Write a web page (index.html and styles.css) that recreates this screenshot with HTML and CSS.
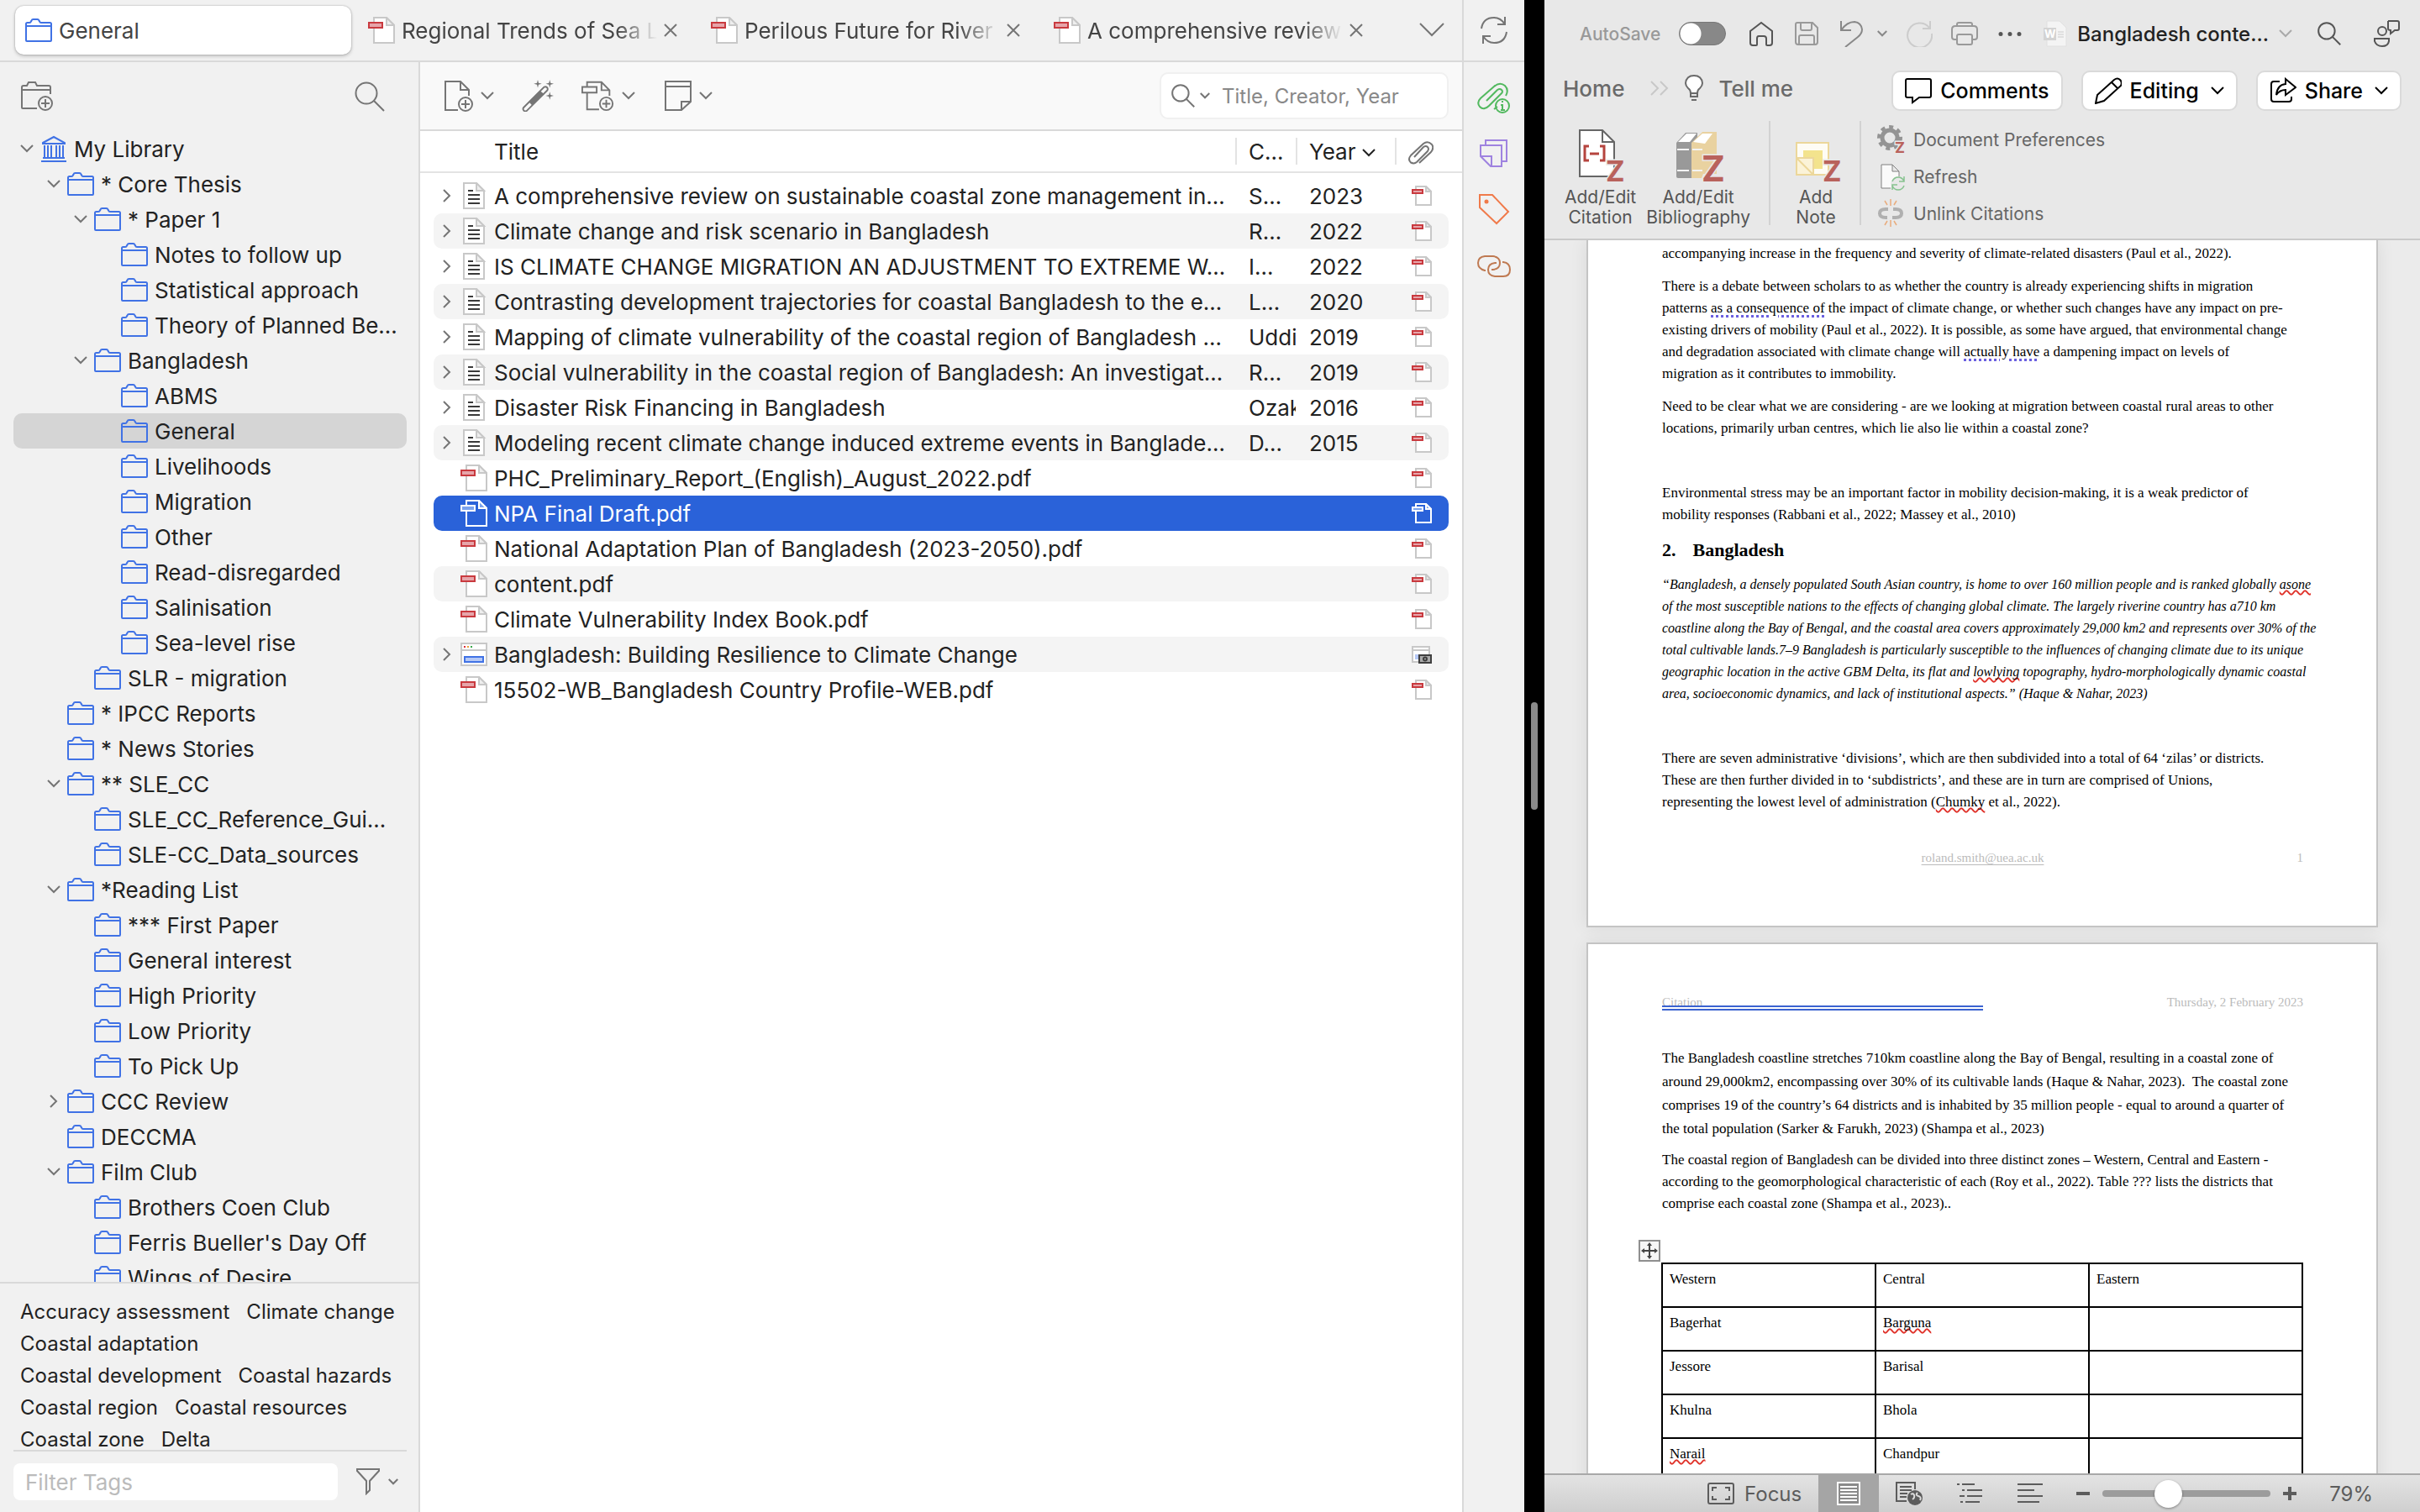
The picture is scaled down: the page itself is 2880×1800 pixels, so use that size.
FILE: index.html
```html
<!DOCTYPE html>
<html lang="en">
<head>
    <meta charset="UTF-8">
    <meta name="viewport" content="width=device-width, initial-scale=1.0">
    <title>General - Library</title>
    <link rel="stylesheet" href="styles.css">
</head>
<body>
    <!-- shared icons -->
    <svg class="icon-defs" aria-hidden="true">
        <symbol id="i-folder" viewBox="0 0 32 28">
            <path d="M1 26V6.500q0-1.500 1.500-1.500h2.500q1.500 0 2-1.500l.5-1q.5-1.500 2-1.500h5q1.500 0 2 1.500l.5 1q.5 1.500 2 1.500h10.500q1.500 0 1.500 1.500V26q0 1-1 1H2q-1 0-1-1zM1 9h30" fill="none" stroke="currentColor" stroke-width="2"/>
        </symbol>
        <symbol id="i-library" viewBox="0 0 32 32">
            <path d="M3 9l13-7 13 7v1H3zM5 12v14M9 12v14M13 12v14M19 12v14M23 12v14M27 12v14M3 27h26M1 31h30" fill="none" stroke="currentColor" stroke-width="2"/>
        </symbol>
        <symbol id="i-down" viewBox="0 0 16 10">
            <path d="M1 1l7 7 7-7" fill="none" stroke="currentColor" stroke-width="2" vector-effect="non-scaling-stroke"/>
        </symbol>
        <symbol id="i-right" viewBox="0 0 10 16">
            <path d="M1 1l7 7-7 7" fill="none" stroke="currentColor" stroke-width="2"/>
        </symbol>
        <symbol id="i-close" viewBox="0 0 16 16">
            <path d="M1 1l14 14M15 1L1 15" fill="none" stroke="currentColor" stroke-width="2"/>
        </symbol>
        <symbol id="i-search" viewBox="0 0 36 36">
            <path d="M14 1.500a12.500 12.500 0 1 1 0 25a12.500 12.500 0 1 1 0-25zM23 23l12 12" fill="none" stroke="currentColor" stroke-width="2" vector-effect="non-scaling-stroke"/>
        </symbol>
        <symbol id="i-pdf" viewBox="0 0 32 32">
            <path class="sheet" d="M7 1h15l9 9v21H7z"/>
            <path class="fold" d="M22 1v9h9z"/>
            <path class="band" d="M1 7h16v6H1z"/>
        </symbol>
        <symbol id="i-pdf-small" viewBox="0 0 24 24">
            <path class="sheet" d="M5 1h12l6 6v16H5z"/>
            <path class="fold" d="M17 1v6h6z"/>
            <path class="band" d="M1 5h12v4H1z"/>
        </symbol>
        <symbol id="i-article" viewBox="0 0 32 32">
            <path class="sheet" d="M4 1h15l9 9v21H4z"/>
            <path class="fold" d="M19 1v9h9z"/>
            <path d="M9 10h6M9 15h14M9 20h14M9 25h14" stroke="#3a3a3a" stroke-width="2"/>
        </symbol>
        <symbol id="i-webpage" viewBox="0 0 32 28">
            <path class="sheet" d="M1 1h30v26H1zM1 9h30"/>
            <path d="M4 5h2" stroke="#db2c3a" stroke-width="2"/>
            <path d="M8 5h2" stroke="#e8a33a" stroke-width="2"/>
            <path d="M12 5h2" stroke="#39a84a" stroke-width="2"/>
            <path d="M5 17h22v6H5z" fill="#b5c8f5" stroke="#4072e5" stroke-width="2"/>
        </symbol>
        <symbol id="i-snapshot" viewBox="0 0 24 24">
            <path class="sheet" d="M1 3h20v18H1zM1 7h20"/>
            <path d="M4 12h7v6H4z" fill="#b5c8f5"/>
            <path d="M9 13h14v9H9z" fill="#aaa" stroke="#3f3f3f" stroke-width="2"/>
            <circle cx="16" cy="17.500" r="2" fill="none" stroke="#3f3f3f" stroke-width="2"/>
        </symbol>
        <symbol id="i-clip" viewBox="0 0 30 28">
            <path d="M13 26L27 13q4-5 1-9-5-5-10-1L3 17q-4 5 0 8.500 4 2 7-.5L23 12q2-3 0-5t-5 0L7 19" fill="none" stroke="currentColor" stroke-width="2"/>
        </symbol>
        <symbol id="i-add-folder" viewBox="0 0 40 36">
            <path d="M20 32H3q-1 0-1-1V7q0-2 2-2h4l2-4h8l2 4h14q2 0 2 2v8M2 10h34" fill="none" stroke="currentColor" stroke-width="2"/>
            <circle cx="30" cy="26" r="8" fill="none" stroke="currentColor" stroke-width="2"/>
            <path d="M30 21v10M25 26h10" stroke="currentColor" stroke-width="2"/>
        </symbol>
        <symbol id="i-new-item" viewBox="0 0 36 38">
            <path d="M17 36H2V2h18l10 10v7M20 2v10h10" fill="none" stroke="currentColor" stroke-width="2"/>
            <circle cx="26" cy="29" r="8" fill="none" stroke="currentColor" stroke-width="2"/>
            <path d="M26 24v10M21 29h10" stroke="currentColor" stroke-width="2"/>
        </symbol>
        <symbol id="i-wand" viewBox="0 0 40 40">
            <path d="M2 35L28 9q2-1 3.500.5T32 13L6 39q-2 1-3.500-.5T2 35z" fill="none" stroke="currentColor" stroke-width="2"/>
            <path d="M9 28L23 14l5 4L13 32z" fill="currentColor"/>
            <path d="M20 0l1 4 4 1-4 1-1 4-1-4-4-1 4-1zM35 0l1 4 4 1-4 1-1 4-1-4-4-1 4-1zM35 15l1 4 4 1-4 1-1 4-1-4-4-1 4-1z" fill="currentColor"/>
        </symbol>
        <symbol id="i-attach" viewBox="0 0 42 38">
            <path d="M22 36H7V15M7 8V2h18l10 10v7M25 2v10h10M1 8h18v7H1z" fill="none" stroke="currentColor" stroke-width="2"/>
            <circle cx="31" cy="29" r="8" fill="none" stroke="currentColor" stroke-width="2"/>
            <path d="M31 24v10M26 29h10" stroke="currentColor" stroke-width="2"/>
        </symbol>
        <symbol id="i-note" viewBox="0 0 36 38">
            <path d="M4 2h30v24L23 36H4zM4 8h30M23 36V26h11" fill="none" stroke="currentColor" stroke-width="2"/>
        </symbol>
        <symbol id="i-sync" viewBox="0 0 32 32">
            <path d="M1 14Q3 1 16 1q8 0 13 8M29 0v9H20M31 18q-2 13-15 13-8 0-13-8M3 32V23h9" fill="none" stroke="currentColor" stroke-width="2"/>
        </symbol>
        <symbol id="i-filter" viewBox="0 0 28 32">
            <path d="M1 1h26v2L16 15v11l-4 4V15L1 3z" fill="none" stroke="currentColor" stroke-width="2"/>
        </symbol>
    </svg>

    <div class="desktop">
        <section class="library">
            <header class="tabs">
                <div class="tab active">
                    <svg class="icon-folder"><use href="#i-folder"/></svg>
                    <span class="tab-name">General</span>
                </div>
                <div class="tab">
                    <svg class="icon-file"><use href="#i-pdf"/></svg>
                    <span class="tab-name">Regional Trends of Sea L</span>
                    <button class="plain" aria-label="Close tab"><svg class="icon-close"><use href="#i-close"/></svg></button>
                </div>
                <div class="tab">
                    <svg class="icon-file"><use href="#i-pdf"/></svg>
                    <span class="tab-name">Perilous Future for River</span>
                    <button class="plain" aria-label="Close tab"><svg class="icon-close"><use href="#i-close"/></svg></button>
                </div>
                <div class="tab">
                    <svg class="icon-file"><use href="#i-pdf"/></svg>
                    <span class="tab-name">A comprehensive review</span>
                    <button class="plain" aria-label="Close tab"><svg class="icon-close"><use href="#i-close"/></svg></button>
                </div>
                <button class="plain all-tabs" aria-label="List all tabs"><svg class="icon-down-large"><use href="#i-down"/></svg></button>
                <button class="plain sync" aria-label="Sync"><svg><use href="#i-sync"/></svg></button>
            </header>

            <div class="panes">
                <aside class="collections">
                    <div class="collections-bar">
                        <button class="plain" aria-label="New collection"><svg class="icon-tool"><use href="#i-add-folder"/></svg></button>
                        <button class="plain" aria-label="Filter collections"><svg class="icon-search"><use href="#i-search"/></svg></button>
                    </div>
                    <ul class="tree">
                        <li><svg class="twisty"><use href="#i-down"/></svg><svg class="icon-library"><use href="#i-library"/></svg>My Library</li>
                        <li class="level-1"><svg class="twisty"><use href="#i-down"/></svg><svg class="icon-folder"><use href="#i-folder"/></svg>* Core Thesis</li>
                        <li class="level-2"><svg class="twisty"><use href="#i-down"/></svg><svg class="icon-folder"><use href="#i-folder"/></svg>* Paper 1</li>
                        <li class="level-3"><span class="twisty"></span><svg class="icon-folder"><use href="#i-folder"/></svg>Notes to follow up</li>
                        <li class="level-3"><span class="twisty"></span><svg class="icon-folder"><use href="#i-folder"/></svg>Statistical approach</li>
                        <li class="level-3"><span class="twisty"></span><svg class="icon-folder"><use href="#i-folder"/></svg>Theory of Planned Be…</li>
                        <li class="level-2"><svg class="twisty"><use href="#i-down"/></svg><svg class="icon-folder"><use href="#i-folder"/></svg>Bangladesh</li>
                        <li class="level-3"><span class="twisty"></span><svg class="icon-folder"><use href="#i-folder"/></svg>ABMS</li>
                        <li class="level-3 selected"><span class="twisty"></span><svg class="icon-folder"><use href="#i-folder"/></svg>General</li>
                        <li class="level-3"><span class="twisty"></span><svg class="icon-folder"><use href="#i-folder"/></svg>Livelihoods</li>
                        <li class="level-3"><span class="twisty"></span><svg class="icon-folder"><use href="#i-folder"/></svg>Migration</li>
                        <li class="level-3"><span class="twisty"></span><svg class="icon-folder"><use href="#i-folder"/></svg>Other</li>
                        <li class="level-3"><span class="twisty"></span><svg class="icon-folder"><use href="#i-folder"/></svg>Read-disregarded</li>
                        <li class="level-3"><span class="twisty"></span><svg class="icon-folder"><use href="#i-folder"/></svg>Salinisation</li>
                        <li class="level-3"><span class="twisty"></span><svg class="icon-folder"><use href="#i-folder"/></svg>Sea-level rise</li>
                        <li class="level-2"><span class="twisty"></span><svg class="icon-folder"><use href="#i-folder"/></svg>SLR - migration</li>
                        <li class="level-1"><span class="twisty"></span><svg class="icon-folder"><use href="#i-folder"/></svg>* IPCC Reports</li>
                        <li class="level-1"><span class="twisty"></span><svg class="icon-folder"><use href="#i-folder"/></svg>* News Stories</li>
                        <li class="level-1"><svg class="twisty"><use href="#i-down"/></svg><svg class="icon-folder"><use href="#i-folder"/></svg>** SLE_CC</li>
                        <li class="level-2"><span class="twisty"></span><svg class="icon-folder"><use href="#i-folder"/></svg>SLE_CC_Reference_Gui…</li>
                        <li class="level-2"><span class="twisty"></span><svg class="icon-folder"><use href="#i-folder"/></svg>SLE-CC_Data_sources</li>
                        <li class="level-1"><svg class="twisty"><use href="#i-down"/></svg><svg class="icon-folder"><use href="#i-folder"/></svg>*Reading List</li>
                        <li class="level-2"><span class="twisty"></span><svg class="icon-folder"><use href="#i-folder"/></svg>*** First Paper</li>
                        <li class="level-2"><span class="twisty"></span><svg class="icon-folder"><use href="#i-folder"/></svg>General interest</li>
                        <li class="level-2"><span class="twisty"></span><svg class="icon-folder"><use href="#i-folder"/></svg>High Priority</li>
                        <li class="level-2"><span class="twisty"></span><svg class="icon-folder"><use href="#i-folder"/></svg>Low Priority</li>
                        <li class="level-2"><span class="twisty"></span><svg class="icon-folder"><use href="#i-folder"/></svg>To Pick Up</li>
                        <li class="level-1"><svg class="twisty"><use href="#i-right"/></svg><svg class="icon-folder"><use href="#i-folder"/></svg>CCC Review</li>
                        <li class="level-1"><span class="twisty"></span><svg class="icon-folder"><use href="#i-folder"/></svg>DECCMA</li>
                        <li class="level-1"><svg class="twisty"><use href="#i-down"/></svg><svg class="icon-folder"><use href="#i-folder"/></svg>Film Club</li>
                        <li class="level-2"><span class="twisty"></span><svg class="icon-folder"><use href="#i-folder"/></svg>Brothers Coen Club</li>
                        <li class="level-2"><span class="twisty"></span><svg class="icon-folder"><use href="#i-folder"/></svg>Ferris Bueller's Day Off</li>
                        <li class="level-2"><span class="twisty"></span><svg class="icon-folder"><use href="#i-folder"/></svg>Wings of Desire</li>
                    </ul>
                    <ul class="tags">
                        <li>Accuracy assessment</li>
                        <li>Climate change</li>
                        <li>Coastal adaptation</li>
                        <li>Coastal development</li>
                        <li>Coastal hazards</li>
                        <li>Coastal region</li>
                        <li>Coastal resources</li>
                        <li>Coastal zone</li>
                        <li>Delta</li>
                    </ul>
                    <div class="tag-filter">
                        <input type="text" placeholder="Filter Tags" aria-label="Filter Tags">
                        <button class="plain" aria-label="Tag options"><svg class="icon-filter"><use href="#i-filter"/></svg><svg class="icon-down-small"><use href="#i-down"/></svg></button>
                    </div>
                </aside>

                <main class="items">
                    <div class="items-bar">
                        <button class="plain" aria-label="New item"><svg class="icon-item"><use href="#i-new-item"/></svg><svg class="icon-down"><use href="#i-down"/></svg></button>
                        <button class="plain" aria-label="Add by identifier"><svg class="icon-tool"><use href="#i-wand"/></svg></button>
                        <button class="plain" aria-label="Add attachment"><svg class="icon-tool"><use href="#i-attach"/></svg><svg class="icon-down"><use href="#i-down"/></svg></button>
                        <button class="plain" aria-label="New note"><svg class="icon-item"><use href="#i-note"/></svg><svg class="icon-down"><use href="#i-down"/></svg></button>
                        <label class="quick-search">
                            <svg class="icon-search-small"><use href="#i-search"/></svg>
                            <svg class="icon-down-small"><use href="#i-down"/></svg>
                            <input type="text" placeholder="Title, Creator, Year" aria-label="Quick search">
                        </label>
                    </div>
                    <div class="item-list">
                        <table class="item-table">
                            <thead>
                                <tr>
                                    <th class="col-title">Title</th>
                                    <th class="col-creator">C…</th>
                                    <th class="col-year">Year <svg class="icon-down"><use href="#i-down"/></svg></th>
                                    <th class="col-attach"><svg class="icon-clip"><use href="#i-clip"/></svg></th>
                                </tr>
                            </thead>
                            <tbody>
                                <tr><td><span class="title"><svg class="twisty"><use href="#i-right"/></svg><svg class="icon-file"><use href="#i-article"/></svg>A comprehensive review on sustainable coastal zone management in…</span></td><td>S…</td><td>2023</td><td><svg class="icon-attached"><use href="#i-pdf-small"/></svg></td></tr>
                                <tr><td><span class="title"><svg class="twisty"><use href="#i-right"/></svg><svg class="icon-file"><use href="#i-article"/></svg>Climate change and risk scenario in Bangladesh</span></td><td>R…</td><td>2022</td><td><svg class="icon-attached"><use href="#i-pdf-small"/></svg></td></tr>
                                <tr><td><span class="title"><svg class="twisty"><use href="#i-right"/></svg><svg class="icon-file"><use href="#i-article"/></svg>IS CLIMATE CHANGE MIGRATION AN ADJUSTMENT TO EXTREME W…</span></td><td>I…</td><td>2022</td><td><svg class="icon-attached"><use href="#i-pdf-small"/></svg></td></tr>
                                <tr><td><span class="title"><svg class="twisty"><use href="#i-right"/></svg><svg class="icon-file"><use href="#i-article"/></svg>Contrasting development trajectories for coastal Bangladesh to the e…</span></td><td>L…</td><td>2020</td><td><svg class="icon-attached"><use href="#i-pdf-small"/></svg></td></tr>
                                <tr><td><span class="title"><svg class="twisty"><use href="#i-right"/></svg><svg class="icon-file"><use href="#i-article"/></svg>Mapping of climate vulnerability of the coastal region of Bangladesh …</span></td><td>Uddi</td><td>2019</td><td><svg class="icon-attached"><use href="#i-pdf-small"/></svg></td></tr>
                                <tr><td><span class="title"><svg class="twisty"><use href="#i-right"/></svg><svg class="icon-file"><use href="#i-article"/></svg>Social vulnerability in the coastal region of Bangladesh: An investigat…</span></td><td>R…</td><td>2019</td><td><svg class="icon-attached"><use href="#i-pdf-small"/></svg></td></tr>
                                <tr><td><span class="title"><svg class="twisty"><use href="#i-right"/></svg><svg class="icon-file"><use href="#i-article"/></svg>Disaster Risk Financing in Bangladesh</span></td><td>Ozak</td><td>2016</td><td><svg class="icon-attached"><use href="#i-pdf-small"/></svg></td></tr>
                                <tr><td><span class="title"><svg class="twisty"><use href="#i-right"/></svg><svg class="icon-file"><use href="#i-article"/></svg>Modeling recent climate change induced extreme events in Banglade…</span></td><td>D…</td><td>2015</td><td><svg class="icon-attached"><use href="#i-pdf-small"/></svg></td></tr>
                                <tr><td><span class="title"><span class="twisty"></span><svg class="icon-file"><use href="#i-pdf"/></svg>PHC_Preliminary_Report_(English)_August_2022.pdf</span></td><td></td><td></td><td><svg class="icon-attached"><use href="#i-pdf-small"/></svg></td></tr>
                                <tr class="selected"><td><span class="title"><span class="twisty"></span><svg class="icon-file"><use href="#i-pdf"/></svg>NPA Final Draft.pdf</span></td><td></td><td></td><td><svg class="icon-attached"><use href="#i-pdf-small"/></svg></td></tr>
                                <tr><td><span class="title"><span class="twisty"></span><svg class="icon-file"><use href="#i-pdf"/></svg>National Adaptation Plan of Bangladesh (2023-2050).pdf</span></td><td></td><td></td><td><svg class="icon-attached"><use href="#i-pdf-small"/></svg></td></tr>
                                <tr><td><span class="title"><span class="twisty"></span><svg class="icon-file"><use href="#i-pdf"/></svg>content.pdf</span></td><td></td><td></td><td><svg class="icon-attached"><use href="#i-pdf-small"/></svg></td></tr>
                                <tr><td><span class="title"><span class="twisty"></span><svg class="icon-file"><use href="#i-pdf"/></svg>Climate Vulnerability Index Book.pdf</span></td><td></td><td></td><td><svg class="icon-attached"><use href="#i-pdf-small"/></svg></td></tr>
                                <tr><td><span class="title"><svg class="twisty"><use href="#i-right"/></svg><svg class="icon-file"><use href="#i-webpage"/></svg>Bangladesh: Building Resilience to Climate Change</span></td><td></td><td></td><td><svg class="icon-attached"><use href="#i-snapshot"/></svg></td></tr>
                                <tr><td><span class="title"><span class="twisty"></span><svg class="icon-file"><use href="#i-pdf"/></svg>15502-WB_Bangladesh Country Profile-WEB.pdf</span></td><td></td><td></td><td><svg class="icon-attached"><use href="#i-pdf-small"/></svg></td></tr>
                            </tbody>
                        </table>
                    </div>
                </main>

                <nav class="sidenav">
                    <button class="plain green" aria-label="Attachment info">
                        <svg viewBox="0 0 40 38"><path d="M11 22L24 9q3-2 5 0t0 4L14 28q-6 6-11 1-4-5 1-10L20 5q7-6 13-1 5 5 1 12M20 32l4-3" fill="none" stroke="currentColor" stroke-width="2"/><circle cx="30" cy="28" r="8" fill="none" stroke="currentColor" stroke-width="2"/><path d="M28 27h2v6M28 33h5M29 23h2" fill="none" stroke="currentColor" stroke-width="2"/></svg>
                    </button>
                    <button class="plain purple" aria-label="Notes">
                        <svg viewBox="0 0 40 38"><path d="M10 9V3h25v25h-6M4 9h25v25H16L4 22zM17 34V22H4" fill="none" stroke="currentColor" stroke-width="2"/></svg>
                    </button>
                    <button class="plain orange" aria-label="Tags">
                        <svg viewBox="0 0 40 38"><path d="M3 2h15l19 20-14 14L3 17z" fill="none" stroke="currentColor" stroke-width="2"/><circle cx="11" cy="10" r="2.500" fill="currentColor"/></svg>
                    </button>
                    <button class="plain brown" aria-label="Related">
                        <svg viewBox="0 0 40 38"><path d="M10 26H9Q1 24 1 17T9 9h10q8 1 8 8t-8 8h-2M30 16h1q8 1 8 9t-8 8H21q-8-1-8-8t8-8h2" fill="none" stroke="currentColor" stroke-width="2"/></svg>
                    </button>
                </nav>
            </div>
        </section>

        <div class="divider"><span class="grip"></span></div>

        <section class="word">
            <header class="ribbon">
                <div class="titlebar">
                    <label class="autosave">AutoSave <input type="checkbox"></label>
                    <button class="plain dark" aria-label="Home"><svg viewBox="0 0 32 32"><path d="M3 13L16 3l13 10v14q0 3-3 3h-3q-1 0-1-1v-7q0-3-3-3h-6q-2 0-2 3v7q0 1-1 1H6q-3 0-3-3z" fill="none" stroke="currentColor" stroke-width="2"/></svg></button>
                    <button class="plain" aria-label="Save"><svg viewBox="0 0 32 32"><path d="M5 3h18l6 6v17q0 3-3 3H6q-3 0-3-3V5q0-2 2-2M9 3v7q0 2 2 2h9q2 0 2-2V3M7 29V20q0-2 2-2h14q2 0 2 2v9" fill="none" stroke="currentColor" stroke-width="2"/></svg></button>
                    <button class="plain undo" aria-label="Undo"><svg viewBox="0 0 32 32"><path d="M3 1v11h12M3 12Q10 2 19 2q8 1 9 9 0 5-5 9L8 32" fill="none" stroke="currentColor" stroke-width="2"/></svg><svg class="icon-down-small"><use href="#i-down"/></svg></button>
                    <button class="plain faint" aria-label="Redo"><svg viewBox="0 0 32 32"><path d="M29 1v9H20M28 9A14.500 14.500 0 1 0 31 16" fill="none" stroke="currentColor" stroke-width="2"/></svg></button>
                    <button class="plain" aria-label="Print"><svg viewBox="0 0 32 32"><path d="M7 7V5q0-2 2-2h14q2 0 2 2v2M7 23H4q-3 0-3-3v-9q0-4 4-4h22q4 0 4 4v9q0 3-3 3h-3M9 17h14q2 0 2 2v8q0 2-2 2H9q-2 0-2-2v-8q0-2 2-2z" fill="none" stroke="currentColor" stroke-width="2"/></svg></button>
                    <button class="plain dark" aria-label="More"><svg viewBox="0 0 32 32"><path d="M5 14a2.500 2.500 0 1 1 0 5a2.500 2.500 0 1 1 0-5M16 14a2.500 2.500 0 1 1 0 5a2.500 2.500 0 1 1 0-5M27 14a2.500 2.500 0 1 1 0 5a2.500 2.500 0 1 1 0-5" fill="currentColor"/></svg></button>
                    <h1 class="doc-name">
                        <svg viewBox="0 0 28 32"><path d="M4 1h15l8 8v22H4z" fill="#f4f4f4" stroke="#e0e0e0"/><path d="M0 9h15v15H0z" fill="#d3d3d3"/><text x="1" y="21" font-size="13" font-weight="700" fill="#fff">W</text><path d="M17 14h7M17 17h7M17 20h7" stroke="#ccc"/></svg>
                        Bangladesh conte...
                        <svg class="icon-down"><use href="#i-down"/></svg>
                    </h1>
                    <button class="plain dark find" aria-label="Search"><svg class="icon-search-small"><use href="#i-search"/></svg></button>
                    <button class="plain dark" aria-label="Share status"><svg viewBox="0 0 32 32"><circle cx="11" cy="13" r="5" fill="none" stroke="currentColor" stroke-width="2"/><path d="M2 22h17v3q-1 6-8 6t-9-6zM18 1h11q2 0 2 2v7q0 2-2 2h-3l-5 4v-4q-3 0-3-2V1" fill="none" stroke="currentColor" stroke-width="2"/></svg></button>
                </div>

                <div class="menubar">
                    <a href="#home">Home</a>
                    <svg class="more-tabs" viewBox="0 0 24 20"><path d="M2 2l8 8-8 8M13 2l8 8-8 8" fill="none" stroke="currentColor" stroke-width="2"/></svg>
                    <a href="#tell-me"><svg class="icon-bulb" viewBox="0 0 22 32"><path d="M7 22q0-4-3-6-3-3-3-6 1-9 10-9t10 9q0 3-3 6-3 2-3 6z" fill="#fff" stroke="currentColor" stroke-width="2"/><path d="M7 22v4h8v-4M8 30h6" fill="none" stroke="currentColor" stroke-width="2"/></svg>Tell me</a>
                    <div class="actions">
                        <button class="pill"><svg viewBox="0 0 32 32"><path d="M3 2h26q2 0 2 2v18q0 2-2 2H17l-8 6v-6H3q-2 0-2-2V4q0-2 2-2z" fill="none" stroke="currentColor" stroke-width="2"/></svg>Comments</button>
                        <button class="pill"><svg viewBox="0 0 32 32"><path d="M1 31l2-10L23 3q4-3 7 0t1 7L11 28zM20 6l7 7" fill="none" stroke="currentColor" stroke-width="2"/></svg>Editing<svg class="icon-down"><use href="#i-down"/></svg></button>
                        <button class="pill"><svg viewBox="0 0 32 32"><path d="M12 5H5q-3 0-3 3v18q0 3 3 3h18q3 0 3-3v-3M19 2l12 10-12 9v-6q-7 0-11 6 1-12 11-13z" fill="none" stroke="currentColor" stroke-width="2"/></svg>Share<svg class="icon-down"><use href="#i-down"/></svg></button>
                    </div>
                </div>

                <div class="tools">
                    <button class="plain tool">
                        <svg viewBox="0 0 60 64"><path d="M5 2h27l14 14v41H5z" fill="#fff" stroke="#666" stroke-width="2"/><path d="M32 2v14h14" fill="none" stroke="#666" stroke-width="2"/><path d="M16 21h-5v17h5M29 21h5v17h-5M17 30h11" fill="none" stroke="#b5443e" stroke-width="3"/><text class="z" x="36" y="63" font-size="34">Z</text></svg>
                        Add/Edit<br>Citation
                    </button>
                    <button class="plain tool">
                        <svg viewBox="0 0 60 64"><path d="M4 17L15 5h14v48l-7 6H6q-2 0-2-2z" fill="#999"/><path d="M6 16L16 6h12l-8 10z" fill="#fff"/><path d="M22 17L35 4h17v50H36l-2 5H22z" fill="#e9d2a0"/><path d="M24 16L35 6h12l-9 12z" fill="#fff"/><path d="M5 25h14M5 50h14M23 25h12M23 50h12" stroke="#f3f3f3" stroke-width="2"/><text class="z" x="34" y="63" font-size="42">Z</text></svg>
                        Add/Edit<br>Bibliography
                    </button>
                    <span class="rule"></span>
                    <button class="plain tool">
                        <svg viewBox="0 0 60 64"><path d="M7 17h38v38H7z" fill="#fefcf4" stroke="#ecd79a" stroke-width="2"/><path d="M15 26h23v22H15z" fill="#f3e38d"/><path d="M7 35h20v20H7zM7 35l20 20" fill="#fbf3d8" stroke="#ecd79a" stroke-width="2"/><text class="z" x="38" y="63" font-size="34">Z</text></svg>
                        Add<br>Note
                    </button>
                    <span class="rule"></span>
                    <div class="tool-list">
                        <button class="plain"><svg viewBox="0 0 34 34"><circle cx="16" cy="15" r="9" fill="none" stroke="#949494" stroke-width="5"/><circle cx="16" cy="15" r="13" fill="none" stroke="#949494" stroke-width="4" stroke-dasharray="5 5"/><text class="z" x="22" y="33" font-size="18">Z</text></svg>Document Preferences</button>
                        <button class="plain"><svg viewBox="0 0 34 34"><path d="M17 31H6V3h13l8 8v6M19 3v8h8" fill="#fafafa" stroke="#808080" stroke-width="1"/><circle cx="26" cy="26" r="9" fill="#e8e8e8"/><path d="M19 23q2-5 7-5t7 5M33 17v6h-6M33 28q-2 5-7 5t-7-5M19 33v-6h6" fill="none" stroke="#86c28f" stroke-width="1.500"/></svg>Refresh</button>
                        <button class="plain"><svg viewBox="0 0 34 34"><path d="M14 12h-3q-7 0-7 5t7 5h2M20 12h3q7 0 7 5t-7 5h-4" fill="none" stroke="#b0b0b0" stroke-width="4"/><path d="M17 0v8M10 2l3 5M24 2l-3 5M17 25v8M13 26l-3 5M21 26l3 5" stroke="#e9ac7d" stroke-width="1.500"/></svg>Unlink Citations</button>
                    </div>
                </div>
            </header>

            <div class="canvas">
                <article class="page page-one">
                    <p>accompanying increase in the frequency and severity of climate-related disasters (Paul et al., 2022).</p>
                    <p>There is a debate between scholars to as whether the country is already experiencing shifts in migration<br>
                    patterns <span class="grammar">as a consequence of</span> the impact of climate change, or whether such changes have any impact on pre-<br>
                    existing drivers of mobility (Paul et al., 2022). It is possible, as some have argued, that environmental change<br>
                    and degradation associated with climate change will <span class="grammar">actually have</span> a dampening impact on levels of<br>
                    migration as it contributes to immobility.</p>
                    <p>Need to be clear what we are considering - are we looking at migration between coastal rural areas to other<br>
                    locations, primarily urban centres, which lie also lie within a coastal zone?</p>
                    <p class="blank"></p>
                    <p>Environmental stress may be an important factor in mobility decision-making, it is a weak predictor of<br>
                    mobility responses (Rabbani et al., 2022; Massey et al., 2010)</p>
                    <h2><span>2.</span>Bangladesh</h2>
                    <blockquote>“Bangladesh, a densely populated South Asian country, is home to over 160 million people and is ranked globally <span class="spelling">asone</span><br>
                    of the most susceptible nations to the effects of changing global climate. The largely riverine country has a710 km<br>
                    coastline along the Bay of Bengal, and the coastal area covers approximately 29,000 km2 and represents over 30% of the<br>
                    total cultivable lands.7–9 Bangladesh is particularly susceptible to the influences of changing climate due to its unique<br>
                    geographic location in the active GBM Delta, its flat and <span class="spelling">lowlying</span> topography, hydro-morphologically dynamic coastal<br>
                    area, socioeconomic dynamics, and lack of institutional aspects.” (Haque &amp; Nahar, 2023)</blockquote>
                    <p class="blank"></p>
                    <p>There are seven administrative ‘divisions’, which are then subdivided into a total of 64 ‘zilas’ or districts.<br>
                    These are then further divided in to ‘subdistricts’, and these are in turn are comprised of Unions,<br>
                    representing the lowest level of administration (<span class="spelling">Chumky</span> et al., 2022).</p>
                    <footer class="page-footer"><a href="mailto:roland.smith@uea.ac.uk">roland.smith@uea.ac.uk</a><span>1</span></footer>
                </article>

                <article class="page">
                    <header class="page-header"><span>Citation</span><span>Thursday, 2 February 2023</span></header>
                    <p class="loose">The Bangladesh coastline stretches 710km coastline along the Bay of Bengal, resulting in a coastal zone of<br>
                    around 29,000km2, encompassing over 30% of its cultivable lands (Haque &amp; Nahar, 2023).&nbsp; The coastal zone<br>
                    comprises 19 of the country’s 64 districts and is inhabited by 35 million people - equal to around a quarter of<br>
                    the total population (Sarker &amp; Farukh, 2023) (Shampa et al., 2023)</p>
                    <p>The coastal region of Bangladesh can be divided into three distinct zones – Western, Central and Eastern -<br>
                    according to the geomorphological characteristic of each (Roy et al., 2022). Table ??? lists the districts that<br>
                    comprise each coastal zone (Shampa et al., 2023)..</p>
                    <div class="zones">
                        <svg class="move-handle" viewBox="0 0 26 26"><path d="M1 1h24v24H1z" fill="#f6f6f6" stroke="#8f8f8f" stroke-width="2"/><path d="M13 5v16M5 13h16" stroke="#444" stroke-width="2"/><path d="M13 3l3 4h-6zM13 23l3-4h-6zM3 13l4 3v-6zM23 13l-4 3v-6z" fill="#444"/></svg>
                        <table>
                            <tr><td>Western</td><td>Central</td><td>Eastern</td></tr>
                            <tr><td>Bagerhat</td><td><span class="spelling">Barguna</span></td><td></td></tr>
                            <tr><td>Jessore</td><td>Barisal</td><td></td></tr>
                            <tr><td>Khulna</td><td>Bhola</td><td></td></tr>
                            <tr><td><span class="spelling">Narail</span></td><td>Chandpur</td><td></td></tr>
                        </table>
                    </div>
                </article>
            </div>

            <footer class="statusbar">
                <button class="plain focus"><svg viewBox="0 0 32 26"><path d="M3 1h26q2 0 2 2v20q0 2-2 2H3q-2 0-2-2V3q0-2 2-2zM6 10V6h5M21 6h5v4M26 16v4h-5M11 20H6v-4" fill="none" stroke="currentColor" stroke-width="2"/></svg>Focus</button>
                <div class="views">
                    <button class="plain current" aria-label="Print layout"><svg viewBox="0 0 34 30"><path d="M4 2h26v26H4z" fill="#8a8a8a" stroke="#fff" stroke-width="2"/><path d="M7 7h20M7 11h20M7 15h20M7 19h20M7 23h20" stroke="#fff" stroke-width="2"/></svg></button>
                    <button class="plain" aria-label="Web layout"><svg viewBox="0 0 34 30"><path d="M14 24H2V2h22v8M6 7h14M6 11h14M6 15h9M6 19h8" fill="none" stroke="currentColor" stroke-width="2"/><circle cx="24" cy="20" r="9" fill="currentColor"/><path d="M19 16q3-2 4 1t-2 5M27 14q-3 3 1 4t2 5" fill="none" stroke="#ddd" stroke-width="2"/></svg></button>
                    <button class="plain" aria-label="Outline"><svg viewBox="0 0 34 30"><path d="M2 4h3M8 4h15M8 11h3M14 11h18M14 18h18M5 18h6M6 25h3M12 25h17" stroke="currentColor" stroke-width="2"/></svg></button>
                    <button class="plain" aria-label="Draft"><svg viewBox="0 0 34 30"><path d="M2 4h30M2 11h20M2 18h30M2 25h26" stroke="currentColor" stroke-width="2"/></svg></button>
                </div>
                <div class="zoom">
                    <button class="plain" aria-label="Zoom out"><svg viewBox="0 0 18 18"><path d="M1 9h16" stroke="currentColor" stroke-width="4"/></svg></button>
                    <input type="range" min="10" max="195" value="79" aria-label="Zoom">
                    <button class="plain" aria-label="Zoom in"><svg viewBox="0 0 18 18"><path d="M1 9h16M9 1v16" stroke="currentColor" stroke-width="4"/></svg></button>
                </div>
                <span class="percent">79%</span>
            </footer>
        </section>
    </div>
</body>
</html>
```
FILE: styles.css
```css
* {
    box-sizing: border-box;
}

body {
    margin: 0;
    font-family: Inter, "Liberation Sans", sans-serif;
    font-size: 26px;
    color: #222;
}

ul {
    list-style: none;
    margin: 0;
    padding: 0;
}

svg {
    flex: none;
    display: block;
}

input {
    font-family: inherit;
}

.icon-defs {
    position: absolute;
    width: 0;
    height: 0;
}

.plain {
    display: flex;
    align-items: center;
    padding: 0;
    border: none;
    background: none;
    font: inherit;
    color: #757575;
    cursor: pointer;
}

.desktop {
    display: grid;
    grid-template-columns: 1814fr 24px 1042fr;
    height: 100vh;
    overflow: hidden;
}

/* icon sizes */
.icon-folder {
    width: 32px;
    height: 28px;
    color: #4072e5;
}

.icon-library {
    width: 32px;
    height: 32px;
    color: #4072e5;
}

.icon-file {
    width: 32px;
    height: 32px;
}

.icon-attached {
    width: 24px;
    height: 24px;
}

.icon-tool {
    width: 40px;
    height: 38px;
}

.icon-item {
    width: 36px;
    height: 38px;
}

.icon-close {
    width: 16px;
    height: 16px;
}

.icon-search {
    width: 36px;
    height: 36px;
}

.icon-search-small {
    width: 28px;
    height: 28px;
}

.icon-down {
    width: 16px;
    height: 10px;
}

.icon-down-small {
    width: 12px;
    height: 8px;
}

.icon-down-large {
    width: 32px;
    height: 20px;
}

.icon-clip {
    width: 30px;
    height: 28px;
    color: #757575;
}

.icon-filter {
    width: 28px;
    height: 32px;
}

.sheet {
    fill: var(--paper, #fff);
    stroke: var(--paper-edge, #c8c8c8);
    stroke-width: 2px;
}

.fold {
    fill: var(--paper-fold, #eee);
    stroke: var(--paper-edge, #c8c8c8);
    stroke-width: 2px;
}

.band {
    fill: var(--band, #e6a5aa);
    stroke: var(--band-edge, #c93a3f);
    stroke-width: 2px;
}

/* library window */
.library {
    display: flex;
    flex-direction: column;
    min-width: 0;
    min-height: 0;
    background: #fff;
}

.tabs {
    display: flex;
    align-items: center;
    height: 74px;
    padding-left: 18px;
    background: #f1f1f1;
    border-bottom: 2px solid #d9d9d9;
}

.tab {
    display: flex;
    align-items: center;
    gap: 8px;
    flex: 0 1 400px;
    min-width: 0;
    height: 58px;
    margin-right: 8px;
    padding: 0 20px 0 12px;
    color: #444;
}

.tab.active {
    background: #fff;
    border-radius: 10px;
    box-shadow: 0 0 2px rgba(0, 0, 0, 0.3), 0 2px 4px rgba(0, 0, 0, 0.2);
}

.tab-name {
    flex: 1;
    overflow: hidden;
    white-space: nowrap;
}

.tab:not(.active) .tab-name {
    mask-image: linear-gradient(to right, #000 84%, transparent);
}

.all-tabs {
    margin: 0 20px 0 auto;
}

.sync {
    justify-content: center;
    width: 74px;
    height: 72px;
    border-left: 2px solid #d9d9d9;
}

.sync svg {
    width: 32px;
    height: 32px;
}

.panes {
    display: grid;
    grid-template-columns: 500px 1fr 74px;
    flex: 1;
    min-height: 0;
}

.collections {
    display: flex;
    flex-direction: column;
    min-height: 0;
    background: #f1f1f1;
    border-right: 2px solid #d9d9d9;
}

.collections-bar {
    display: flex;
    align-items: center;
    justify-content: space-between;
    height: 82px;
    padding: 0 40px 0 24px;
}

.tree {
    flex: 1;
    min-height: 0;
    overflow: hidden;
    padding: 0 14px 0 16px;
}

.tree li {
    display: flex;
    align-items: center;
    gap: 8px;
    height: 42px;
    padding-left: 8px;
    border-radius: 10px;
    white-space: nowrap;
}

.tree .level-1 {
    padding-left: 40px;
}

.tree .level-2 {
    padding-left: 72px;
}

.tree .level-3 {
    padding-left: 104px;
}

.tree .selected {
    background: #d5d5d5;
}

.twisty {
    flex: none;
    width: 16px;
    height: 16px;
    color: #757575;
}

.tags {
    display: flex;
    flex-wrap: wrap;
    column-gap: 20px;
    height: 200px;
    padding: 15px 16px 0 24px;
    overflow: hidden;
    border-top: 2px solid #d9d9d9;
    font-size: 24px;
    line-height: 38px;
}

.tag-filter {
    display: flex;
    align-items: center;
    gap: 22px;
    height: 74px;
    margin: 0 14px 0 16px;
    border-top: 2px solid #d9d9d9;
}

.tag-filter input {
    flex: 1;
    min-width: 0;
    height: 44px;
    padding: 0 14px;
    border: none;
    border-radius: 8px;
    font-size: 26px;
}

.tag-filter input::placeholder {
    color: #bbb;
}

.tag-filter .plain {
    gap: 10px;
    margin-right: 10px;
}

.items {
    display: flex;
    flex-direction: column;
    min-width: 0;
}

.items-bar {
    display: flex;
    align-items: center;
    gap: 32px;
    height: 82px;
    padding: 0 16px 0 28px;
    background: #f9f9f9;
    border-bottom: 2px solid #d9d9d9;
}

.items-bar .plain {
    gap: 8px;
}

.quick-search {
    display: flex;
    align-items: center;
    gap: 6px;
    width: 344px;
    height: 56px;
    margin-left: auto;
    padding: 0 12px;
    background: #fff;
    border: 2px solid #f0f0f0;
    border-radius: 10px;
    color: #757575;
}

.quick-search input {
    flex: 1;
    min-width: 0;
    padding: 0 0 0 8px;
    border: none;
    font-size: 24px;
}

.quick-search input::placeholder {
    color: #888;
}

/* the line under the column headers spans the whole pane */
.item-list {
    flex: 1;
    padding: 0 16px;
    background: linear-gradient(#e3e3e3, #e3e3e3) 0 48px / 100% 2px no-repeat;
}

.item-table {
    width: 100%;
    border-spacing: 0;
    table-layout: fixed;
    white-space: nowrap;
}

.item-table th {
    position: relative;
    height: 48px;
    padding: 0 0 0 16px;
    font-weight: 400;
    text-align: left;
}

.item-table .col-title {
    padding-left: 72px;
}

.item-table th + th::before {
    content: "";
    position: absolute;
    left: 0;
    top: 8px;
    height: 32px;
    border-left: 2px solid #e3e3e3;
}

.item-table th svg {
    display: inline-block;
    vertical-align: middle;
}

.col-creator {
    width: 72px;
}

.col-year {
    width: 118px;
}

.col-attach {
    width: 64px;
}

.item-table tbody::before {
    content: "";
    display: block;
    height: 8px;
}

.item-table td {
    height: 42px;
    padding: 0 0 0 16px;
    overflow: hidden;
}

.item-table td:first-child {
    padding-left: 8px;
    border-radius: 10px 0 0 10px;
}

.item-table td:last-child {
    padding-left: 20px;
    border-radius: 0 10px 10px 0;
}

.item-table tbody tr:nth-child(even) td {
    background: #f4f4f4;
}

.title {
    display: flex;
    align-items: center;
    gap: 8px;
}

.item-table tbody tr.selected td {
    --paper: #2a62d9;
    --paper-fold: #7ba3ee;
    --paper-edge: #fff;
    --band: #7ba3ee;
    --band-edge: #fff;
    background: #2a62d9;
    color: #fff;
}

.sidenav {
    display: flex;
    flex-direction: column;
    align-items: center;
    gap: 28px;
    padding-top: 24px;
    background: #f1f1f1;
    border-left: 2px solid #d9d9d9;
}

.sidenav svg {
    width: 40px;
    height: 38px;
}

.sidenav .green {
    color: #52b95f;
}

.sidenav .purple {
    color: #9f83e0;
}

.sidenav .orange {
    color: #f07a4a;
}

.sidenav .brown {
    color: #bf7a52;
}

.divider {
    display: flex;
    align-items: center;
    justify-content: center;
    background: #000;
}

.grip {
    width: 8px;
    height: 128px;
    border-radius: 4px;
    background: #8a8a8a;
}

/* word processor window */
.word {
    display: flex;
    flex-direction: column;
    min-width: 0;
    min-height: 0;
    background: #ebebeb;
}

.ribbon {
    height: 286px;
    background: #e8e8e8;
    border-bottom: 2px solid #c9c9c9;
}

.titlebar {
    display: flex;
    align-items: center;
    gap: 22px;
    height: 80px;
    padding: 0 24px 0 42px;
}

.titlebar .plain {
    color: #999;
}

.titlebar .dark {
    color: #555;
}

.titlebar .faint {
    color: #ccc;
}

.titlebar svg:not([class]) {
    width: 32px;
    height: 32px;
}

.titlebar .undo {
    gap: 14px;
    color: #888;
}

.autosave {
    display: flex;
    align-items: center;
    gap: 22px;
    margin-right: 4px;
    font-size: 21px;
    font-weight: 500;
    color: #999;
}

.autosave input {
    appearance: none;
    width: 56px;
    height: 28px;
    margin: 0;
    border: 1px solid #777;
    border-radius: 14px;
    background: radial-gradient(circle at 13px 13px, #fff 12px, transparent 13px), #888;
}

.doc-name {
    display: flex;
    align-items: center;
    gap: 10px;
    flex: 1;
    margin: 0;
    font-size: 24px;
    font-weight: 500;
    white-space: nowrap;
}

.doc-name .icon-down {
    margin-left: 2px;
    color: #aaa;
}

.find {
    margin-right: 16px;
}

.menubar {
    display: flex;
    align-items: center;
    height: 56px;
    padding: 0 22px;
}

.menubar a {
    display: flex;
    align-items: center;
    gap: 18px;
    padding-bottom: 6px;
    color: #6a6a6a;
    font-weight: 500;
    text-decoration: none;
}

.more-tabs {
    width: 24px;
    height: 20px;
    margin: 0 18px 6px 30px;
    color: #c8c8c8;
}

.icon-bulb {
    width: 22px;
    height: 32px;
}

.actions {
    display: flex;
    gap: 22px;
    margin-left: auto;
}

.pill {
    display: flex;
    align-items: center;
    gap: 10px;
    height: 48px;
    padding: 0 14px;
    border: 2px solid #dadada;
    border-radius: 10px;
    background: #fff;
    color: #000;
    font: inherit;
    font-size: 25px;
    font-weight: 500;
}

.pill svg:not([class]) {
    width: 32px;
    height: 32px;
}

.pill .icon-down {
    margin-left: 4px;
}

.tools {
    display: flex;
    height: 148px;
    padding: 8px 18px;
    font-size: 21px;
}

.tool {
    display: block;
    padding: 4px 6px 0;
    line-height: 24px;
    color: #555;
    text-align: center;
}

.tool svg {
    width: 60px;
    height: 64px;
    margin: 0 auto 6px;
}

/* badge letter on the citation tools */
.z {
    font-weight: 700;
    fill: #b9625c;
    stroke: #e8e8e8;
    stroke-width: 3px;
    paint-order: stroke;
}

.rule {
    width: 2px;
    height: 124px;
    margin: 0 18px 0 16px;
    background: #d2d2d2;
}

.tool-list {
    display: flex;
    flex-direction: column;
    gap: 10px;
    padding-top: 5px;
}

.tool-list .plain {
    gap: 10px;
    color: #666;
}

.tool-list svg {
    width: 34px;
    height: 34px;
}

.canvas {
    flex: 1;
    min-height: 0;
    overflow: hidden;
    padding: 0 50px;
    font-family: "Liberation Serif", serif;
    font-size: 17px;
    line-height: 26px;
    color: #000;
}

.page {
    padding: 56px 87px 40px 88px;
    background: #fff;
    border: 2px solid #c4c4c4;
    box-shadow: 0 0 20px rgba(0, 0, 0, 0.08);
    white-space: nowrap;
}

.page p,
.page blockquote {
    margin: 0 0 13px;
}

.page blockquote {
    font-size: 16px;
    font-style: italic;
}

.page-one {
    padding-top: 3px;
    padding-bottom: 68px;
    border-top: none;
    margin-bottom: 18px;
}

.page .blank {
    height: 25px;
}

.page h2 {
    display: flex;
    gap: 20px;
    margin: 13px 0 12px;
    font-size: 22px;
    line-height: 32px;
}

.page .loose {
    margin-bottom: 10px;
    line-height: 28px;
}

.grammar {
    text-decoration: underline dotted #6a5fe0 3px;
    text-underline-offset: 3px;
}

.spelling {
    text-decoration: underline wavy #e0322a 2px;
    text-decoration-skip-ink: none;
    text-underline-offset: 1px;
}

.page-footer {
    display: grid;
    grid-template-columns: 1fr auto 1fr;
    margin-top: 40px;
    font-size: 15px;
    color: #bbb;
}

.page-footer a {
    grid-column: 2;
    color: inherit;
    text-underline-offset: 3px;
}

.page-footer span {
    text-align: right;
}

.page-header {
    position: relative;
    display: flex;
    justify-content: space-between;
    margin-bottom: 40px;
    font-size: 15px;
    color: #bbb;
}

/* double rule drawn over the header text */
.page-header::after {
    content: "";
    position: absolute;
    left: 0;
    top: 17px;
    width: 50%;
    border-top: 6px double #3a62d0;
}

.zones {
    position: relative;
    margin: 57px 0 0 -1px;
}

.zones table {
    width: 100%;
    border-collapse: collapse;
    table-layout: fixed;
}

.zones td {
    height: 52px;
    padding: 5px 8px;
    border: 2px solid #000;
    vertical-align: top;
    line-height: 26px;
}

.move-handle {
    position: absolute;
    left: -27px;
    top: -27px;
    width: 26px;
    height: 26px;
}

.statusbar {
    display: flex;
    align-items: center;
    flex: none;
    height: 46px;
    padding-right: 56px;
    background: linear-gradient(#e3e3e3, #cfcfcf);
    border-top: 2px solid #a9a9a9;
    font-size: 24px;
    color: #5c5c5c;
}

.statusbar .plain {
    color: #5c5c5c;
}

.focus {
    gap: 12px;
    margin-left: auto;
}

.focus svg {
    width: 32px;
    height: 26px;
}

.views {
    display: flex;
    margin-left: 20px;
}

.views .plain {
    justify-content: center;
    width: 72px;
    height: 46px;
}

.views svg {
    width: 34px;
    height: 30px;
}

.views .current {
    background: #a5a5a5;
}

.zoom {
    display: flex;
    align-items: center;
    gap: 14px;
    margin-left: 18px;
}

.zoom svg {
    width: 18px;
    height: 18px;
}

.zoom input {
    appearance: none;
    width: 200px;
    height: 8px;
    margin: 0;
    border-radius: 4px;
    background: #9c9c9c;
}

.zoom input::-webkit-slider-thumb {
    appearance: none;
    width: 33px;
    height: 33px;
    border-radius: 50%;
    background: #fff;
    box-shadow: 0 1px 3px rgba(0, 0, 0, 0.4);
}

.percent {
    margin-left: 38px;
}
```
